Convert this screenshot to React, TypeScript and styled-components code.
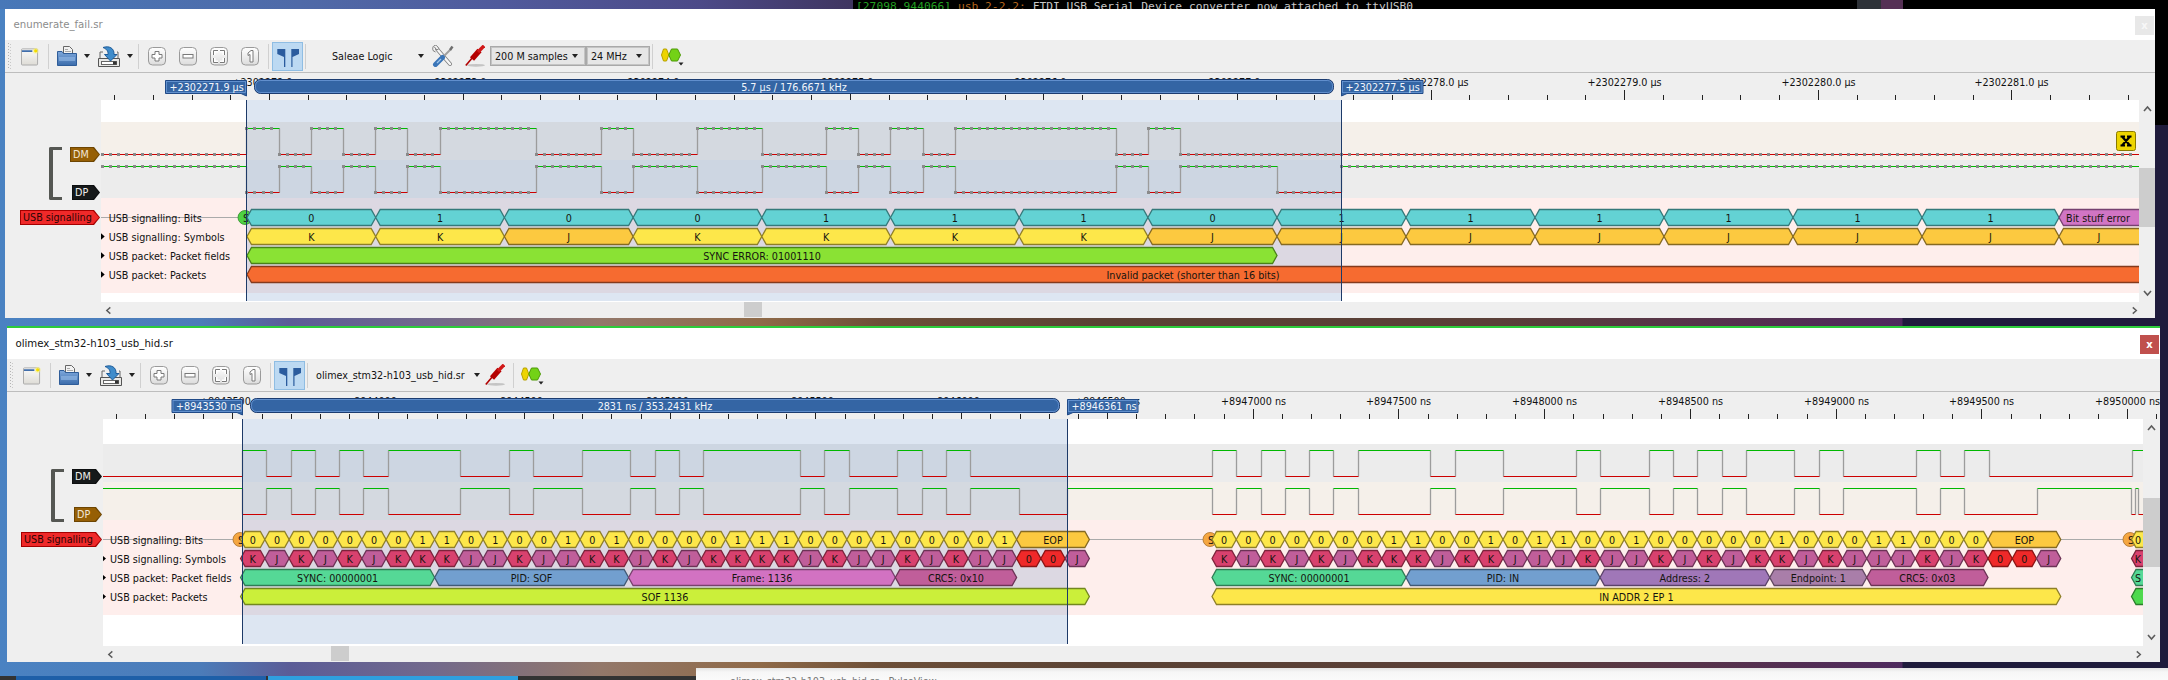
import React from 'react';
import styled, { createGlobalStyle } from 'styled-components';

const FONT = `"DejaVu Sans", "Noto Sans", sans-serif`;

const GlobalStyle = createGlobalStyle`
  html, body { margin: 0; padding: 0; background: #1f1b3c; }
  body { font-family: ${FONT}; font-stretch: condensed; overflow: hidden; }
`;

/* ---------- desktop ---------- */
const Desktop = styled.div`
  position: relative;
  width: 2168px;
  height: 680px;
  overflow: hidden;
  background: linear-gradient(90deg, #4a82c2 0, #4c7cb9 200px, #5b5c97 290px, #72698c 430px, #93786a 600px, #8f6a48 760px, #6d4f38 880px, #5a4234 1100px, #5a3f38 1500px, #55304f 1750px, #4e2a5e 1902px, #1f1b3c 1903px);
`;

const TopStrip = styled.div`
  position: absolute;
  left: 0;
  top: 0;
  width: 2168px;
  height: 9px;
  display: flex;
  overflow: hidden;
  background: linear-gradient(90deg, #4878b8 0, #4f6aa8 300px, #505a9c 500px, #4c4a88 700px, #3f3560 853px);
`;

const TerminalPane = styled.div<{ $w: number; $ml?: number }>`
  width: ${p => p.$w}px;
  margin-left: ${p => p.$ml ?? 0}px;
  height: 9px;
  background: #000;
  overflow: hidden;
  padding-left: 3px;
  box-sizing: border-box;
  font: 11.26px/14px "DejaVu Sans Mono", monospace;
  font-stretch: normal;
  letter-spacing: 0.02px;
  white-space: pre;
  color: #c8c8c8;
`;

const Ts = styled.span`color: #22a022;`;
const Tu = styled.span`color: #b5651d;`;

const StripPiece = styled.div<{ $w: number; $c: string }>`
  width: ${p => p.$w}px;
  height: 9px;
  background: ${p => p.$c};
`;

const BlackEdge = styled.div`
  position: absolute;
  left: 2155px;
  top: 0;
  width: 13px;
  height: 125px;
  background: #000;
`;

const Popup = styled.div`
  position: absolute;
  left: 696px;
  top: 668px;
  width: 1472px;
  height: 12px;
  background: linear-gradient(180deg, #e4e4e4 0, #f6f6f6 4px, #fafafa 100%);
  overflow: hidden;
  font-size: 10.7px;
  line-height: 14px;
  color: #777;
  padding: 7px 0 0 34px;
  box-sizing: border-box;
`;

const Taskbar = styled.div`
  position: absolute;
  left: 0;
  top: 676px;
  width: 696px;
  height: 4px;
  background: #333;
  display: flex;
  padding-left: 16px;
  box-sizing: border-box;
  gap: 2px;
`;

const TaskTab = styled.div<{ $c: string; $w: number }>`
  width: ${p => p.$w}px;
  background: ${p => p.$c};
`;

/* ---------- window ---------- */
const Win = styled.div<{ $l: number; $t: number; $w: number; $green?: boolean }>`
  position: absolute;
  left: ${p => p.$l}px;
  top: ${p => p.$t}px;
  width: ${p => p.$w}px;
  display: flex;
  flex-direction: column;
  background: #efefef;
  overflow: hidden;
  border-top: ${p => (p.$green ? '2px solid #2ccc3a' : 'none')};
`;

const TitleBar = styled.div<{ $dim: boolean }>`
  height: 31px;
  background: #fff;
  display: flex;
  align-items: center;
  justify-content: space-between;
  padding: 0 1px 0 8.5px;
  font-size: 11.3px;
  color: ${p => (p.$dim ? '#8c8c8c' : '#111')};
`;

const CloseBtn = styled.div<{ $active: boolean }>`
  width: 19px;
  height: 19px;
  margin-top: 2px;
  display: flex;
  align-items: center;
  justify-content: center;
  font: bold 10px "DejaVu Sans", sans-serif;
  color: ${p => (p.$active ? '#fff' : '#f7f7f7')};
  background: ${p => (p.$active ? '#c0504d' : '#e8e8e8')};
`;

const Toolbar = styled.div`
  height: 32px;
  background: #efefef;
  border-bottom: 1px solid #bdbdbd;
  display: flex;
  align-items: center;
  font-size: 10.7px;
  color: #111;
`;

const Slot = styled.div<{ $ml: number; $w: number }>`
  margin-left: ${p => p.$ml}px;
  width: ${p => p.$w}px;
  flex: none;
  display: flex;
  align-items: center;
  justify-content: center;
`;

const TextSlot = styled(Slot)`
  justify-content: flex-start;
  white-space: nowrap;
`;

const Grip = styled.div`
  margin-left: 3px;
  width: 4px;
  height: 26px;
  flex: none;
  background:
    repeating-linear-gradient(180deg, #b4b4b4 0, #b4b4b4 1px, transparent 1px, transparent 3px) 0 0 / 1px 100% no-repeat,
    repeating-linear-gradient(180deg, #c8c8c8 0, #c8c8c8 1px, transparent 1px, transparent 3px) 2px 1px / 1px 100% no-repeat;
`;

const Sep = styled.div<{ $ml: number }>`
  margin-left: ${p => p.$ml}px;
  width: 1px;
  height: 25px;
  flex: none;
  background: #d0d0d0;
`;

const Caret = styled.div<{ $ml: number }>`
  margin-left: ${p => p.$ml}px;
  flex: none;
  width: 0;
  height: 0;
  border-left: 3.5px solid transparent;
  border-right: 3.5px solid transparent;
  border-top: 4px solid #222;
`;

const ActiveBtn = styled.div<{ $ml: number }>`
  margin-left: ${p => p.$ml}px;
  width: 31px;
  height: 29px;
  flex: none;
  box-sizing: border-box;
  background: #bcd9f2;
  border: 1px solid #8fbde3;
`;

const ComboGroup = styled.div<{ $ml: number }>`
  margin-left: ${p => p.$ml}px;
  display: flex;
  flex: none;
`;

const Combo = styled.div<{ $w: number }>`
  width: ${p => p.$w}px;
  height: 20px;
  box-sizing: border-box;
  border: 1px solid #a9a9a9;
  box-shadow: inset 0 0 0 1px #c4c4c4;
  background: #e6e6e6;
  padding: 0 7px 0 4px;
  display: flex;
  align-items: center;
  justify-content: space-between;
  white-space: nowrap;
`;

const ComboCaret = styled.div`
  width: 0;
  height: 0;
  border-left: 3.5px solid transparent;
  border-right: 3.5px solid transparent;
  border-top: 4px solid #222;
`;

const RulerBox = styled.div`
  height: 27px;
`;

const Body = styled.div<{ $h: number }>`
  height: ${p => p.$h}px;
  display: flex;
`;

const Gutter = styled.div<{ $pt: number }>`
  width: 96px;
  flex: none;
  box-sizing: border-box;
  padding: ${p => p.$pt}px 0 0 14px;
  display: flex;
  flex-direction: column;
`;

const GroupRow = styled.div`
  height: 53px;
  margin: 0 0 10px 30px;
  display: flex;
`;

const Bracket = styled.div`
  width: 9px;
  box-sizing: content-box;
  border-left: 4px solid #555753;
  border-top: 3px solid #555753;
  border-bottom: 3px solid #555753;
  border-radius: 2px 0 0 2px;
  height: 47px;
  flex: none;
`;

const TagColumn = styled.div`
  flex: 1;
  margin-left: 7px;
  display: flex;
  flex-direction: column;
  justify-content: space-between;
  align-items: flex-end;
  margin-right: 1px;
`;

const TAGS: Record<string, { edge: string; fill: string; text: string }> = {
  brown: { edge: '#6d4502', fill: '#965f05', text: '#f1e6d6' },
  black: { edge: '#0d0f10', fill: '#16191a', text: '#eeeeec' },
  red: { edge: '#a40000', fill: '#ef2929', text: '#2a0505' },
};

const PENT = 'polygon(0 0, calc(100% - 6px) 0, 100% 50%, calc(100% - 6px) 100%, 0 100%)';

const Tag = styled.div<{ $kind: string; $w: number }>`
  position: relative;
  width: ${p => p.$w}px;
  height: 15px;
  clip-path: ${PENT};
  background: ${p => TAGS[p.$kind].edge};
  font-size: 10.7px;
  line-height: 15px;
  color: ${p => TAGS[p.$kind].text};
  &::before {
    content: '';
    position: absolute;
    inset: 1px;
    clip-path: ${PENT};
    background: ${p => TAGS[p.$kind].fill};
  }
`;

const TagText = styled.span`
  position: relative;
  padding-left: 3px;
  white-space: nowrap;
`;

const SignalTagRow = styled.div`
  display: flex;
  justify-content: flex-end;
  padding-right: 1px;
`;

const CanvasBox = styled.div`
  flex: 1;
  min-width: 0;
  background: #fff;
`;

const ChartSvg = styled.svg`
  display: block;
  text {
    font-family: ${FONT};
    font-stretch: condensed;
    font-size: 10.7px;
  }
`;

const VScroll = styled.div<{ $w: number }>`
  width: ${p => p.$w}px;
  flex: none;
  display: flex;
  flex-direction: column;
  align-items: center;
  background: #efefef;
`;

const ArrowCell = styled.div`
  height: 18px;
  flex: none;
  display: flex;
  align-items: center;
  justify-content: center;
`;

const VThumb = styled.div<{ $mt: number; $h: number }>`
  align-self: stretch;
  margin-top: ${p => p.$mt}px;
  height: ${p => p.$h}px;
  background: #cdcdcd;
  flex: none;
`;

const VSpacer = styled.div`
  flex: 1;
`;

const HScroll = styled.div<{ $pr: number }>`
  height: 16px;
  display: flex;
  align-items: flex-start;
  background: #efefef;
  padding: 0 ${p => p.$pr}px 0 100px;
`;

const HArrow = styled.div`
  width: 8px;
  height: 16px;
  flex: none;
  display: flex;
  align-items: center;
  justify-content: center;
`;

const HThumb = styled.div<{ $ml: number }>`
  margin-left: ${p => p.$ml}px;
  width: 18px;
  height: 15px;
  flex: none;
  background: #cdcdcd;
`;

const HSpacer = styled.div`
  flex: 1;
`;

const HiddenDefs = styled.svg`
  position: absolute;
  width: 0;
  height: 0;
`;

const ChevronSvg = styled.svg`
  display: block;
  width: 9px;
  height: 9px;
`;

/* ---------- icons ---------- */
const IconDefs = () => (
  <HiddenDefs>
    <defs>
      <linearGradient id="btnG" x1="0" y1="0" x2="0" y2="1">
        <stop offset="0" stopColor="#ffffff" />
        <stop offset="1" stopColor="#dcdcdc" />
      </linearGradient>
      <linearGradient id="folderG" x1="0" y1="0" x2="0" y2="1">
        <stop offset="0" stopColor="#7ea8dc" />
        <stop offset="1" stopColor="#3b6cab" />
      </linearGradient>
      <linearGradient id="docG" x1="0" y1="0" x2="0" y2="1">
        <stop offset="0" stopColor="#fafafa" />
        <stop offset="1" stopColor="#dedcd6" />
      </linearGradient>
    </defs>
  </HiddenDefs>
);

const NewIcon = () => (
  <svg width="19" height="19" viewBox="0 0 19 19">
    <rect x="0.5" y="1.5" width="17" height="17" rx="1" fill="url(#docG)" stroke="#a8a8a8" />
    <rect x="1" y="3" width="11" height="1.6" fill="#24599f" />
    <circle cx="15.5" cy="3.5" r="3" fill="#fff46a" opacity="0.55" />
    <circle cx="15.5" cy="3.5" r="1.7" fill="#f3dd00" />
  </svg>
);

const OpenIcon = () => (
  <svg width="20" height="20" viewBox="0 0 20 20">
    <path d="M6.5 .5H12.5L15.5 3.5V10H6.5Z" fill="#f2f2f2" stroke="#666" />
    <path d="M8 3.5H11M8 5.5H14M8 7.5H14" stroke="#aaa" />
    <path d="M.5 5.5H5L6.5 7.5H19.5V19.5H.5Z" fill="url(#folderG)" stroke="#2f5d99" />
    <rect x="2" y="11" width="16" height="4" fill="#8db3e2" opacity="0.7" />
  </svg>
);

const SaveIcon = () => (
  <svg width="22" height="21" viewBox="0 0 22 21">
    <path d="M2 12.5V6H5M19 6H20V12.5" fill="none" stroke="#666" />
    <path d="M.5 12.5H21.5V20.5H.5Z" fill="#e9e9e7" stroke="#555" />
    <rect x="3.5" y="15.5" width="15" height="3" fill="#fff" stroke="#666" />
    <rect x="15" y="15.5" width="3.5" height="3" fill="#333" />
    <path d="M5 1.5C11 -.5 16.5 2 16 8.5H19L12.5 15L6.5 8.5H10C10.5 5 8.5 3 5 1.5Z" fill="#3f8ccb" stroke="#1f5c99" />
  </svg>
);

const ZoomShell = ({ children }: { children: React.ReactNode }) => (
  <svg width="18" height="19" viewBox="0 0 18 19">
    <rect x="0.5" y="0.5" width="17" height="17.5" rx="4" fill="url(#btnG)" stroke="#9a9a9a" />
    {children}
  </svg>
);

const ZoomIn = () => (
  <ZoomShell>
    <path d="M7 4.5H11V7.5H14V11H11V14H7V11H4V7.5H7Z" fill="#fff" stroke="#7a7a7a" />
  </ZoomShell>
);
const ZoomOut = () => (
  <ZoomShell>
    <rect x="4" y="7.5" width="10" height="3.5" fill="#fff" stroke="#7a7a7a" />
  </ZoomShell>
);
const ZoomFit = () => (
  <ZoomShell>
    <path d="M4 8V4H8M10 4H14V8M14 11V15H10M8 15H4V11" fill="none" stroke="#fff" strokeWidth="3" />
    <path d="M3.5 8V3.5H8M10 3.5H14.5V8M14.5 11V15.5H10M8 15.5H3.5V11" fill="none" stroke="#7a7a7a" />
  </ZoomShell>
);
const ZoomOne = () => (
  <ZoomShell>
    <path d="M7 6L10 3.5H12V15H9V7.5L7 8.5Z" fill="#fff" stroke="#7a7a7a" />
  </ZoomShell>
);

const CursorIcon = () => (
  <svg width="29" height="27" viewBox="0 0 29 27">
    <path d="M4.3 6H12.3V24H11V14L4.3 11Z" fill="#2b5c9e" />
    <path d="M26 6H18.3V24H19.5V14L26 11Z" fill="#2b5c9e" />
  </svg>
);

const ToolsIcon = () => (
  <svg width="22" height="22" viewBox="0 0 22 22">
    <path d="M5 4L18 19" stroke="#7c7c7c" strokeWidth="4" strokeLinecap="round" />
    <path d="M5 4L18 19" stroke="#f6f6f6" strokeWidth="2.4" strokeLinecap="round" />
    <path d="M2 1.5L5 5L7 3.5L4.5 .5C2 -.5 0 2 1 5.5L3.5 7" fill="#f6f6f6" stroke="#7c7c7c" />
    <path d="M19 4L10 13" stroke="#a0a0a0" strokeWidth="2" />
    <path d="M20.5 1.5L18 5" stroke="#6f6f6f" strokeWidth="2.5" />
    <path d="M10.5 12.5L3.5 19.5" stroke="#3a75b8" strokeWidth="5" strokeLinecap="round" />
    <path d="M9 14L5 18" stroke="#9cc4ea" strokeWidth="1.2" />
  </svg>
);

const ProbeIcon = () => (
  <svg width="20" height="22" viewBox="0 0 20 22">
    <ellipse cx="11" cy="20.3" rx="9" ry="1.4" fill="#c4c4c4" />
    <path d="M.8 20.5L8 12" stroke="#b00000" strokeWidth="1.6" />
    <path d="M7 14L14.5 5.5" stroke="#b40000" strokeWidth="5.5" />
    <path d="M13 7L19 .8" stroke="#d01818" strokeWidth="3.4" />
  </svg>
);

const DecoderIcon = () => (
  <svg width="23" height="19" viewBox="0 0 23 19">
    <path d="M.5 8L2.5 2H5.5L7.8 8L5.5 14H2.5Z" fill="#edd400" stroke="#b7a100" />
    <path d="M7.8 8L10.5 2H16.5L19.5 8L16.5 14H10.5Z" fill="#73d216" stroke="#4e9a06" />
    <path d="M17.5 15.5H22.5L20 18.5Z" fill="#222" />
  </svg>
);

const CHEVRONS = {
  up: 'M1 6L4.5 2L8 6',
  down: 'M1 2L4.5 6L8 2',
  left: 'M6 1L2 4.5L6 8',
  right: 'M2 1L6 4.5L2 8',
};

const Chevron = ({ dir }: { dir: keyof typeof CHEVRONS }) => (
  <ChevronSvg viewBox="0 0 9 9">
    <path d={CHEVRONS[dir]} fill="none" stroke="#5c5c5c" strokeWidth="1.6" />
  </ChevronSvg>
);

/* ---------- chart data ---------- */
type Ann = { x0: number; x1: number; row: number; text?: string; color: string; tx?: number };

const PALETTE: Record<string, { fill: string; stroke: string }> = {
  teal: { fill: '#63d2d4', stroke: '#35797a' },
  yellow: { fill: '#fde74a', stroke: '#8e7f28' },
  amber: { fill: '#fcc940', stroke: '#856a22' },
  lime: { fill: '#8ae234', stroke: '#4a8219' },
  orange: { fill: '#f66b30', stroke: '#853a1c' },
  magenta: { fill: '#d175c4', stroke: '#764170' },
  crimson: { fill: '#d8416e', stroke: '#7c233b' },
  mauve: { fill: '#c05e9a', stroke: '#6c3356' },
  red: { fill: '#ef2929', stroke: '#8a1414' },
  sync: { fill: '#55d896', stroke: '#2f7c54' },
  pid: { fill: '#729fcf', stroke: '#405a75' },
  frame: { fill: '#d272c2', stroke: '#77416d' },
  crc: { fill: '#c05e9a', stroke: '#6c3356' },
  sof: { fill: '#cbef3a', stroke: '#72871f' },
  addr: { fill: '#a077b8', stroke: '#5a4269' },
  ep: { fill: '#a97ea9', stroke: '#604760' },
  green: { fill: '#4ed94e', stroke: '#2b7c2b' },
};

const edgesFromK = (ks: number[], x0: number, p: number) => ks.map(k => x0 + k * p);

type Trace = { edges: number[]; startHigh: boolean; yHigh: number; yLow: number };

const levelAt = (t: Trace, x: number) => {
  let high = t.startHigh;
  for (const e of t.edges) {
    if (x >= e) high = !high;
    else break;
  }
  return high;
};

const snap = (v: number) => Math.round(v) + 0.5;

const TracePaths = ({ trace, xMin, xMax, dots }: { trace: Trace; xMin: number; xMax: number; dots?: { x0: number; step: number } }) => {
  let high = trace.startHigh;
  let cursor = xMin;
  let hi = '';
  let lo = '';
  let ed = '';
  const pts = [...trace.edges, xMax];
  pts.forEach((e, i) => {
    const ex = snap(e);
    if (high) hi += `M${cursor} ${trace.yHigh}H${ex}`;
    else lo += `M${cursor} ${trace.yLow}H${ex}`;
    if (i < trace.edges.length) ed += `M${ex} ${trace.yHigh}V${trace.yLow}`;
    high = !high;
    cursor = ex;
  });
  let dotPath = '';
  if (dots) {
    const first = Math.ceil((xMin - dots.x0) / dots.step);
    for (let k = first; ; k++) {
      const x = dots.x0 + k * dots.step;
      if (x > xMax - 3) break;
      const y = levelAt(trace, x) ? trace.yHigh : trace.yLow;
      dotPath += `M${Math.round(x) - 1} ${y - 1.5}h3v3h-3z`;
    }
  }
  return (
    <g>
      <path d={ed} stroke="#9c9c9c" strokeWidth="1.3" fill="none" />
      <path d={lo} stroke="#cc0000" strokeWidth="1" fill="none" />
      <path d={hi} stroke="#00b800" strokeWidth="1" fill="none" />
      {dots && <path d={dotPath} fill="#8a8a8a" />}
    </g>
  );
};

const AnnShape = ({ a, rows }: { a: Ann; rows: number[] }) => {
  const cy = rows[a.row];
  const c = Math.min(4.5, (a.x1 - a.x0) / 3);
  const y0 = cy - 8;
  const y1 = cy + 8;
  const pal = PALETTE[a.color];
  return (
    <g>
      <path
        d={`M${a.x0} ${cy}L${a.x0 + c} ${y0}H${a.x1 - c}L${a.x1} ${cy}L${a.x1 - c} ${y1}H${a.x0 + c}Z`}
        fill={pal.fill}
        stroke={pal.stroke}
        strokeWidth="1.3"
      />
      {a.text && (
        <text x={a.tx ?? (a.x0 + a.x1) / 2} y={cy + 4} textAnchor="middle" fill="#15150f">
          {a.text}
        </text>
      )}
    </g>
  );
};

const StartDot = ({ cx, cy, color, stroke }: { cx: number; cy: number; color: string; stroke: string }) => (
  <g>
    <circle cx={cx} cy={cy} r="7" fill={color} stroke={stroke} strokeWidth="0.8" />
    <text x={cx + 1} y={cy + 4} textAnchor="middle" fill="#15150f">S</text>
  </g>
);

type Cfg = {
  left: number;
  width: number;
  rulerTop: number;
  canvasL: number;
  canvasR: number;
  bodyTop: number;
  bodyH: number;
  selBottom: number;
  c1: number;
  c2: number;
  flagL: number;
  flagR: number;
  barL: number;
  barR: number;
  barY: number;
  major: number;
  majorX: number;
  label: (k: number) => string;
  flag1: string;
  flag2: string;
  barText: string;
  barTextX: number;
  labelY: number;
};

const RulerChart = ({ cfg }: { cfg: Cfg }) => {
  const minor = cfg.major / 5;
  const bottom = cfg.rulerTop + 27;
  const ticks: React.ReactNode[] = [];
  const labels: React.ReactNode[] = [];
  const startN = Math.ceil((cfg.canvasL - cfg.majorX) / minor);
  const endN = Math.floor((cfg.left + cfg.width - cfg.majorX) / minor);
  for (let n = startN; n <= endN; n++) {
    const x = snap(cfg.majorX + n * minor);
    const isMajor = n % 5 === 0;
    ticks.push(<path key={n} d={`M${x} ${bottom - (isMajor ? 10 : 5)}V${bottom}`} stroke="#222" strokeWidth="1" />);
    if (isMajor) {
      labels.push(
        <text key={`l${n}`} x={x} y={cfg.labelY + 4} textAnchor="middle" fill="#111">
          {cfg.label(n / 5)}
        </text>
      );
    }
  }
  const y = cfg.barY;
  const f1 = `M${cfg.flagL + 0.5} ${y + 1.5}H${cfg.c1 + 0.5}V${y + 17}L${cfg.c1 - 5} ${y + 14.5}H${cfg.flagL + 0.5}Z`;
  const f2 = `M${cfg.c2 + 0.5} ${y + 1.5}H${cfg.flagR}V${y + 14.5}H${cfg.c2 + 6}L${cfg.c2 + 0.5} ${y + 17}Z`;
  return (
    <ChartSvg width={cfg.width} height={27} viewBox={`${cfg.left} ${cfg.rulerTop} ${cfg.width} 27`}>
      {ticks}
      {labels}
      <path d={f1} fill="#3465a4" stroke="#204a87" strokeWidth="1" />
      <rect x={cfg.flagL + 1.5} y={y + 2.5} width={cfg.c1 - cfg.flagL - 2} height={11} fill="none" stroke="#6d9bd8" strokeWidth="0.8" />
      <text x={cfg.flagL + 4.5} y={y + 12} fill="#f2f6fb">{cfg.flag1}</text>
      <rect x={cfg.barL} y={y + 0.5} width={cfg.barR - cfg.barL} height={14} rx={6} fill="#3465a4" stroke="#1c3c70" strokeWidth="1" />
      <rect x={cfg.barL + 1} y={y + 1.5} width={cfg.barR - cfg.barL - 2} height={12} rx={5} fill="none" stroke="#6d9bd8" strokeWidth="0.8" />
      <text x={cfg.barTextX} y={y + 11.5} textAnchor="middle" fill="#f2f6fb">{cfg.barText}</text>
      <path d={f2} fill="#3465a4" stroke="#204a87" strokeWidth="1" />
      <rect x={cfg.c2 + 1.5} y={y + 2.5} width={cfg.flagR - cfg.c2 - 2.5} height={11} fill="none" stroke="#6d9bd8" strokeWidth="0.8" />
      <text x={cfg.c2 + 4.5} y={y + 12} fill="#f2f6fb">{cfg.flag2}</text>
    </ChartSvg>
  );
};

const CanvasChart = ({ cfg, children, bands }: { cfg: Cfg; children: React.ReactNode; bands: { y: number; h: number; c: string }[] }) => (
  <ChartSvg
    width={cfg.canvasR - cfg.canvasL}
    height={cfg.bodyH}
    viewBox={`${cfg.canvasL} ${cfg.bodyTop} ${cfg.canvasR - cfg.canvasL} ${cfg.bodyH}`}
  >
    {bands.map(b => (
      <rect key={b.y} x={cfg.canvasL} y={b.y} width={cfg.canvasR - cfg.canvasL} height={b.h} fill={b.c} />
    ))}
    <rect x={cfg.c1 + 0.5} y={cfg.bodyTop} width={cfg.c2 - cfg.c1} height={cfg.selBottom - cfg.bodyTop} fill="rgba(66,116,183,0.18)" />
    {children}
    <path d={`M${cfg.c1 + 0.5} ${cfg.bodyTop}V${cfg.selBottom}M${cfg.c2 + 0.5} ${cfg.bodyTop}V${cfg.selBottom}`} stroke="#1d3a68" strokeWidth="1" />
  </ChartSvg>
);

const RowLabels = ({ x, rows, names }: { x: number; rows: number[]; names: string[] }) => (
  <g>
    {names.map((n, i) => (
      <g key={n}>
        {i > 0 && <path d={`M${x - 8} ${rows[i] - 3.5}L${x - 4} ${rows[i]}L${x - 8} ${rows[i] + 3.5}Z`} fill="#000" />}
        <text x={x} y={rows[i] + 4} fill="#111">{n}</text>
      </g>
    ))}
  </g>
);

const ROW_NAMES = ['USB signalling: Bits', 'USB signalling: Symbols', 'USB packet: Packet fields', 'USB packet: Packets'];

/* ---------- session A ---------- */
const cfgA: Cfg = {
  left: 5, width: 2150, rulerTop: 73, canvasL: 101, canvasR: 2139, bodyTop: 100, bodyH: 202, selBottom: 301,
  c1: 246, c2: 1341, flagL: 165, flagR: 1423, barL: 254.5, barR: 1333.5, barY: 79,
  major: 193.6, majorX: 1430.6,
  label: k => `+${(2302278 + k).toFixed(1)} µs`,
  flag1: '+2302271.9 µs', flag2: '+2302277.5 µs', barText: '5.7 µs / 176.6671 kHz', barTextX: 794, labelY: 82,
};

const A_B = [247, 375.7, 504.4, 633.1, 761.8, 890.5, 1019.2, 1147.9, 1277, 1406, 1535, 1664, 1793, 1922, 2059, 2300];
const A_BITS = ['0', '1', '0', '0', '1', '1', '1', '0', '1', '1', '1', '1', '1', '1', 'Bit stuff error'];
const A_SYM = ['K', 'K', 'J', 'K', 'K', 'K', 'K', 'J', 'J', 'J', 'J', 'J', 'J', 'J', 'J'];

const annsA: Ann[] = [
  ...A_BITS.map((t, i): Ann => ({
    x0: A_B[i], x1: A_B[i + 1], row: 0, text: t, color: i === 14 ? 'magenta' : 'teal', tx: i === 14 ? 2098 : undefined,
  })),
  ...A_SYM.map((t, i): Ann => ({
    x0: A_B[i], x1: A_B[i + 1], row: 1, text: t, color: t === 'K' ? 'yellow' : 'amber', tx: i === 14 ? 2099 : undefined,
  })),
  { x0: 247, x1: 1277, row: 2, text: 'SYNC ERROR: 01001110', color: 'lime' },
  { x0: 247, x1: 2300, row: 3, text: 'Invalid packet (shorter than 16 bits)', color: 'orange', tx: 1193 },
];

const P_A = 32.2;
const K_DM = [0, 1, 2, 3, 4, 5, 6, 9, 11, 12, 14, 16, 18, 19, 20, 21, 22, 27, 28, 29];
const K_DP = [...K_DM, 32, 34];
const traceA_DM: Trace = { edges: edgesFromK(K_DM, 246.4, P_A), startHigh: false, yHigh: 128.5, yLow: 154.5 };
const traceA_DP: Trace = { edges: edgesFromK(K_DP, 246.4, P_A), startHigh: true, yHigh: 166.5, yLow: 192.5 };
const rowsA = [217.5, 236.5, 255.5, 274.5];

/* ---------- session B ---------- */
const cfgB: Cfg = {
  left: 7, width: 2153, rulerTop: 392, canvasL: 103, canvasR: 2143, bodyTop: 419, bodyH: 227, selBottom: 644,
  c1: 242, c2: 1067, flagL: 171.5, flagR: 1138, barL: 250.5, barR: 1059.5, barY: 398,
  major: 145.75, majorX: 1252.7,
  label: k => `+${8947000 + k * 500} ns`,
  flag1: '+8943530 ns', flag2: '+8946361 ns', barText: '2831 ns / 353.2431 kHz', barTextX: 655, labelY: 401,
};

const SOF = 'K J K J K J K K K J J K J J K K J K J K K K K J K J J K J K J J'.split(' ');
const IN = 'K J K J K J K K K J K K J J J K J J K J K J K K J K J J J K J K'.split(' ');
const STEP = 24.25;

const nrzi = (syms: string[]) => {
  let prev = 'J';
  return syms.map(s => {
    const b = s === prev ? '1' : '0';
    prev = s;
    return b;
  });
};

const packetAnns = (start: number, syms: string[], fields: { n: number; text: string; color: string }[], pktColor: string, pktText: string): Ann[] => {
  const out: Ann[] = [];
  const bits = nrzi(syms);
  syms.forEach((s, i) => {
    const x0 = start + i * STEP;
    const x1 = x0 + STEP;
    out.push({ x0, x1, row: 0, text: bits[i], color: 'yellow' });
    out.push({ x0, x1, row: 1, text: s, color: s === 'K' ? 'crimson' : 'mauve' });
  });
  const e = start + syms.length * STEP;
  out.push({ x0: e, x1: e + 3 * STEP, row: 0, text: 'EOP', color: 'amber' });
  out.push({ x0: e, x1: e + STEP, row: 1, text: '0', color: 'red' });
  out.push({ x0: e + STEP, x1: e + 2 * STEP, row: 1, text: '0', color: 'red' });
  out.push({ x0: e + 2 * STEP, x1: e + 3 * STEP, row: 1, text: 'J', color: 'mauve' });
  let x = start;
  fields.forEach(f => {
    const w = f.n * STEP;
    out.push({ x0: x, x1: x + w, row: 2, text: f.text, color: f.color });
    x += w;
  });
  out.push({ x0: start, x1: e + 3 * STEP, row: 3, text: pktText, color: pktColor });
  return out;
};

const annsB: Ann[] = [
  ...packetAnns(240.6, SOF, [
    { n: 8, text: 'SYNC: 00000001', color: 'sync' },
    { n: 8, text: 'PID: SOF', color: 'pid' },
    { n: 11, text: 'Frame: 1136', color: 'frame' },
    { n: 5, text: 'CRC5: 0x10', color: 'crc' },
  ], 'sof', 'SOF 1136'),
  ...packetAnns(1212, IN, [
    { n: 8, text: 'SYNC: 00000001', color: 'sync' },
    { n: 8, text: 'PID: IN', color: 'pid' },
    { n: 7, text: 'Address: 2', color: 'addr' },
    { n: 4, text: 'Endpoint: 1', color: 'ep' },
    { n: 5, text: 'CRC5: 0x03', color: 'crc' },
  ], 'yellow', 'IN ADDR 2 EP 1'),
  { x0: 2131.5, x1: 2155.5, row: 0, text: '0', color: 'yellow', tx: 2138 },
  { x0: 2131.5, x1: 2155.5, row: 1, text: 'K', color: 'crimson', tx: 2138 },
  { x0: 2131.5, x1: 2300, row: 2, text: 'S', color: 'sync', tx: 2138 },
  { x0: 2131.5, x1: 2300, row: 3, color: 'green' },
];

const wavesFrom = (packets: { start: number; syms: string[] }[], period: number) => {
  const dm: number[] = [];
  const dp: number[] = [];
  let dmHigh = false;
  let dpHigh = true;
  packets.forEach(({ start, syms }) => {
    const seq = [...syms, '0', '0', 'J'];
    seq.forEach((s, i) => {
      const x = start + i * period;
      const m = s === 'K';
      const p = s === 'J';
      if (m !== dmHigh) { dm.push(x); dmHigh = m; }
      if (p !== dpHigh) { dp.push(x); dpHigh = p; }
    });
  });
  return { dm, dp };
};

const wavesB = wavesFrom([{ start: 242, syms: SOF }, { start: 1212, syms: IN }], 24.27);
const traceB_DM: Trace = { edges: [...wavesB.dm, 2131.7], startHigh: false, yHigh: 450.5, yLow: 476.5 };
const traceB_DP: Trace = { edges: [...wavesB.dp, 2131, 2135, 2138], startHigh: true, yHigh: 488.5, yLow: 514.5 };
const rowsB = [539.5, 558.5, 577.5, 596.5];

/* ---------- toolbar ---------- */
const CommonTools = () => (
  <>
    <Grip />
    <Slot $ml={9} $w={18}><NewIcon /></Slot>
    <Sep $ml={9} />
    <Slot $ml={8} $w={20}><OpenIcon /></Slot>
    <Caret $ml={7} />
    <Slot $ml={8} $w={22}><SaveIcon /></Slot>
    <Caret $ml={7} />
    <Sep $ml={5} />
    <Slot $ml={9} $w={18}><ZoomIn /></Slot>
    <Slot $ml={13} $w={18}><ZoomOut /></Slot>
    <Slot $ml={13} $w={18}><ZoomFit /></Slot>
    <Slot $ml={13} $w={18}><ZoomOne /></Slot>
    <Sep $ml={9} />
    <ActiveBtn $ml={3}><CursorIcon /></ActiveBtn>
    <Sep $ml={2} />
  </>
);

/* ---------- app ---------- */
export default function App() {
  return (
    <Desktop>
      <GlobalStyle />
      <IconDefs />
      <TopStrip>
        <TerminalPane $w={1004} $ml={853}>
          <Ts>[27098.944066]</Ts> <Tu>usb 2-2.2:</Tu> FTDI USB Serial Device converter now attached to ttyUSB0
        </TerminalPane>
        <StripPiece $w={24} $c="#2e3238" />
        <StripPiece $w={22} $c="#553055" />
        <StripPiece $w={265} $c="#000" />
      </TopStrip>
      <BlackEdge />

      <Win $l={5} $t={9} $w={2150}>
        <TitleBar $dim>
          <span>enumerate_fail.sr</span>
          <CloseBtn $active={false}>x</CloseBtn>
        </TitleBar>
        <Toolbar>
          <CommonTools />
          <TextSlot $ml={26} $w={60}>Saleae Logic</TextSlot>
          <Caret $ml={26} />
          <Slot $ml={8} $w={22}><ToolsIcon /></Slot>
          <Slot $ml={11} $w={20}><ProbeIcon /></Slot>
          <ComboGroup $ml={5}>
            <Combo $w={96}>200 M samples<ComboCaret /></Combo>
            <Combo $w={64}>24 MHz<ComboCaret /></Combo>
          </ComboGroup>
          <Sep $ml={2} />
          <Slot $ml={8} $w={23}><DecoderIcon /></Slot>
        </Toolbar>
        <RulerBox><RulerChart cfg={cfgA} /></RulerBox>
        <Body $h={202}>
          <Gutter $pt={47}>
            <GroupRow>
              <Bracket />
              <TagColumn>
                <Tag $kind="brown" $w={30}><TagText>DM</TagText></Tag>
                <Tag $kind="black" $w={28}><TagText>DP</TagText></Tag>
              </TagColumn>
            </GroupRow>
            <SignalTagRow>
              <Tag $kind="red" $w={80}><TagText>USB signalling</TagText></Tag>
            </SignalTagRow>
          </Gutter>
          <CanvasBox>
            <CanvasChart
              cfg={cfgA}
              bands={[
                { y: 122, h: 38, c: '#f5f0ea' },
                { y: 160, h: 38, c: '#ececec' },
                { y: 198, h: 95, c: '#feeeec' },
              ]}
            >
              <TracePaths trace={traceA_DM} xMin={101} xMax={2139} dots={{ x0: 246.4, step: 8.05 }} />
              <TracePaths trace={traceA_DP} xMin={101} xMax={2139} dots={{ x0: 246.4, step: 8.05 }} />
              <path d="M100 217.5H240" stroke="#aaa" strokeWidth="1" />
              <StartDot cx={245} cy={217.5} color="#4ed142" stroke="#2f8a2a" />
              {annsA.map((a, i) => <AnnShape key={i} a={a} rows={rowsA} />)}
              <RowLabels x={108.7} rows={rowsA} names={ROW_NAMES} />
              <rect x="2116.5" y="131.5" width="19" height="19" rx="2" fill="#edd400" stroke="#8a7a00" />
              <path d="M2120.5 136.5H2125M2127 136.5H2131.5M2120.5 145.5H2125M2127 145.5H2131.5M2122 136.5L2130 145.5M2130 136.5L2122 145.5" stroke="#000" strokeWidth="2.2" fill="none" />
            </CanvasChart>
          </CanvasBox>
          <VScroll $w={16}>
            <ArrowCell><Chevron dir="up" /></ArrowCell>
            <VThumb $mt={50} $h={59} />
            <VSpacer />
            <ArrowCell><Chevron dir="down" /></ArrowCell>
          </VScroll>
        </Body>
        <HScroll $pr={16}>
          <HArrow><Chevron dir="left" /></HArrow>
          <HThumb $ml={631} />
          <HSpacer />
          <HArrow><Chevron dir="right" /></HArrow>
        </HScroll>
      </Win>

      <Win $l={7} $t={326} $w={2153} $green>
        <TitleBar $dim={false}>
          <span>olimex_stm32-h103_usb_hid.sr</span>
          <CloseBtn $active>x</CloseBtn>
        </TitleBar>
        <Toolbar>
          <CommonTools />
          <TextSlot $ml={8} $w={149}>olimex_stm32-h103_usb_hid.sr</TextSlot>
          <Caret $ml={9} />
          <Slot $ml={5} $w={20}><ProbeIcon /></Slot>
          <Sep $ml={8} />
          <Slot $ml={7} $w={23}><DecoderIcon /></Slot>
        </Toolbar>
        <RulerBox><RulerChart cfg={cfgB} /></RulerBox>
        <Body $h={227}>
          <Gutter $pt={50}>
            <GroupRow>
              <Bracket />
              <TagColumn>
                <Tag $kind="black" $w={30}><TagText>DM</TagText></Tag>
                <Tag $kind="brown" $w={28}><TagText>DP</TagText></Tag>
              </TagColumn>
            </GroupRow>
            <SignalTagRow>
              <Tag $kind="red" $w={81}><TagText>USB signalling</TagText></Tag>
            </SignalTagRow>
          </Gutter>
          <CanvasBox>
            <CanvasChart
              cfg={cfgB}
              bands={[
                { y: 444, h: 38, c: '#ececec' },
                { y: 482, h: 38, c: '#f5f0ea' },
                { y: 520, h: 95, c: '#feeeec' },
              ]}
            >
              <TracePaths trace={traceB_DM} xMin={103} xMax={2143} />
              <TracePaths trace={traceB_DP} xMin={103} xMax={2143} />
              <path d="M102 539.5H236M1089 539.5H1206M2061 539.5H2126" stroke="#aaa" strokeWidth="1" />
              <StartDot cx={240} cy={539.5} color="#f5a742" stroke="#a8702a" />
              <StartDot cx={1210} cy={539.5} color="#f5a742" stroke="#a8702a" />
              <StartDot cx={2130} cy={539.5} color="#f5a742" stroke="#a8702a" />
              {annsB.map((a, i) => <AnnShape key={i} a={a} rows={rowsB} />)}
              <RowLabels x={110} rows={rowsB} names={ROW_NAMES} />
            </CanvasChart>
          </CanvasBox>
          <VScroll $w={17}>
            <ArrowCell><Chevron dir="up" /></ArrowCell>
            <VThumb $mt={61} $h={69} />
            <VSpacer />
            <ArrowCell><Chevron dir="down" /></ArrowCell>
          </VScroll>
        </Body>
        <HScroll $pr={17}>
          <HArrow><Chevron dir="left" /></HArrow>
          <HThumb $ml={216} />
          <HSpacer />
          <HArrow><Chevron dir="right" /></HArrow>
        </HScroll>
      </Win>

      <Taskbar>
        <TaskTab $c="#1e5fa8" $w={250} />
        <TaskTab $c="#2f9fdf" $w={250} />
      </Taskbar>
      <Popup>olimex_stm32-h103_usb_hid.sr - PulseView</Popup>
    </Desktop>
  );
}
